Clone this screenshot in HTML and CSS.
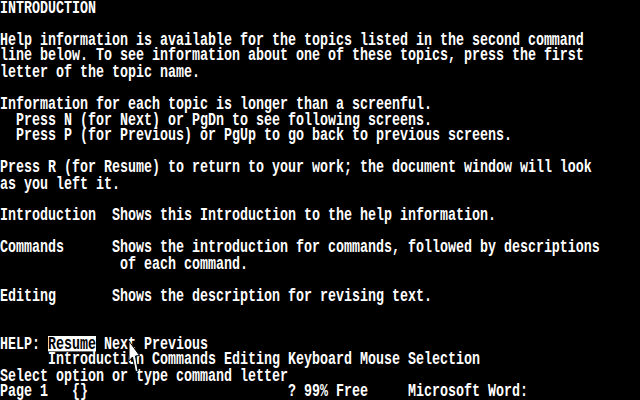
FILE: index.html
```html
<!DOCTYPE html>
<html lang="en">
<head>
    <meta charset="UTF-8">
    <meta name="viewport" content="width=device-width, initial-scale=1.0">
    <title>Microsoft Word Help</title>
    <link rel="stylesheet" href="styles.css">
</head>
<body>
<pre class="screen">INTRODUCTION

Help information is available for the topics listed in the second command
line below. To see information about one of these topics, press the first
letter of the topic name.

Information for each topic is longer than a screenful.
  Press N (for Next) or PgDn to see following screens.
  Press P (for Previous) or PgUp to go back to previous screens.

Press R (for Resume) to return to your work; the document window will look
as you left it.

Introduction  Shows this Introduction to the help information.

Commands      Shows the introduction for commands, followed by descriptions
               of each command.

Editing       Shows the description for revising text.


HELP: <span class="sel">Resume</span> Next Previous
      Introduction Commands Editing Keyboard Mouse Selection
Select option or type command letter
Page 1   {}                         ? 99% Free     Microsoft Word:</pre>

    <!-- mouse pointer -->
    <svg class="pointer" width="13" height="34" viewBox="0 0 13 34">
        <path d="M1 1 L1 21 L4.5 17 L7.5 32 L10 31 L7.5 16 L11.5 15.5 Z" fill="#fff" stroke="#000" stroke-width="1"/>
    </svg>
</body>
</html>
```

FILE: styles.css
```css
* {
    margin: 0;
    padding: 0;
    box-sizing: border-box;
}
html, body {
    background-color: #000;
}
body {
    width: 640px;
    height: 400px;
    overflow: hidden;
    position: relative;
}
.screen {
    /* 80x25 text mode, 8x16 cells: 13.333px mono = 8px wide, stretch Y */
    font-family: "Liberation Mono", monospace;
    font-weight: bold;
    font-size: 13.333px;
    line-height: 11.4286px;
    color: #fff;
    white-space: pre;
    transform: scaleY(1.4);
    transform-origin: 0 0;
}
.sel {
    display: inline-block;
    height: 11.4286px;
    background-color: #fff;
    color: #000;
    vertical-align: top;
}
.pointer {
    position: absolute;
    left: 128px;
    top: 340px;
}
```
